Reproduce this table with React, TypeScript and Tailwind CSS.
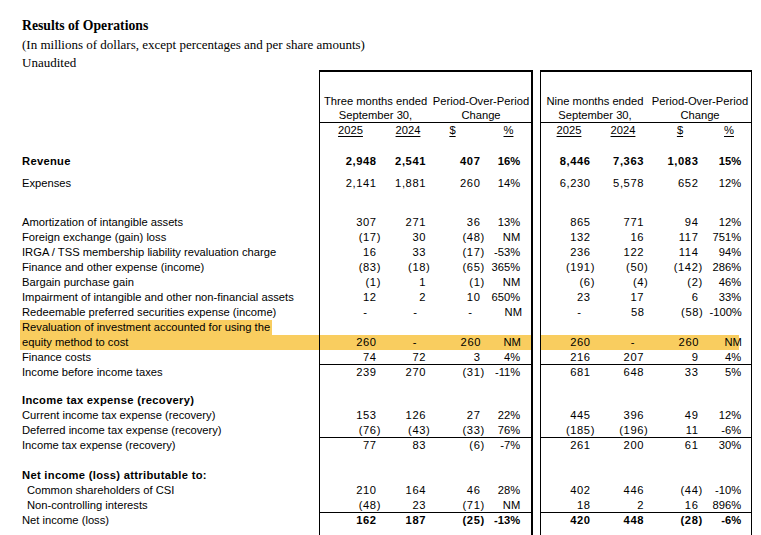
import React from "react";

const HL = "bg-[#f9cd5f]";
const B1W = ["w-[61px]", "w-[50px]", "w-[55px]", "w-[36px]"];
const B2W = ["w-[54px]", "w-[54px]", "w-[55px]", "w-[39px]"];

type V = [string, string, string, string];

function Cell({ v, w, pct }: { v: string; w: string; pct?: boolean }) {
  if (pct) return <div className={`${w} shrink-0 text-right`}>{v}</div>;
  if (v === "-") return <div className={`${w} shrink-0 text-right pr-[14px]`}>-</div>;
  const neg = v.endsWith(")");
  return (
    <div className={`${w} shrink-0 text-right tracking-[0.6px] -mr-[0.6px]`}>
      {v}
      {!neg && <span className="invisible">)</span>}
    </div>
  );
}

function Cells({ vals, widths }: { vals: V; widths: string[] }) {
  return (
    <>
      {vals.map((v, i) => (
        <Cell key={i} v={v} w={widths[i]} pct={i === 3} />
      ))}
    </>
  );
}

function Grid({
  h,
  label,
  b1,
  b2,
  rule,
  top,
}: {
  h: string;
  label?: React.ReactNode;
  b1?: React.ReactNode;
  b2?: React.ReactNode;
  rule?: boolean;
  top?: boolean;
}) {
  return (
    <div className={`flex ${h}`}>
      <div className="w-[319px] shrink-0 flex items-stretch">{label}</div>
      <div
        className={`w-[214px] shrink-0 flex border-l border-r-2 border-black ${rule ? "border-b" : ""} ${top ? "border-t-2" : ""}`}
      >
        {b1}
      </div>
      <div className="w-[7px] shrink-0" />
      <div
        className={`w-[212px] shrink-0 flex border-l border-r border-black ${rule ? "border-b" : ""} ${top ? "border-t-2" : ""}`}
      >
        {b2}
      </div>
    </div>
  );
}

function DataRow({
  label,
  a,
  b,
  rule,
  boldNums,
  boldLabel,
  indent,
  hl,
}: {
  label: string;
  a: V;
  b: V;
  rule?: boolean;
  boldNums?: boolean;
  boldLabel?: boolean;
  indent?: boolean;
  hl?: boolean;
}) {
  return (
    <Grid
      h="h-[15px]"
      rule={rule}
      label={
        hl ? (
          <div className={`ml-[20px] pl-[2px] flex-1 ${HL}`}>{label}</div>
        ) : (
          <div
            className={`${indent ? "pl-[27px]" : "pl-[22px]"} ${boldLabel ? "font-bold tracking-[0.3px]" : ""}`}
          >
            {label}
          </div>
        )
      }
      b1={
        <div className={`flex w-full ${boldNums ? "font-bold" : ""} ${hl ? HL : ""}`}>
          <Cells vals={a} widths={B1W} />
          <div className="w-[9px] shrink-0" />
        </div>
      }
      b2={
        <div className={`flex w-full ${boldNums ? "font-bold" : ""}`}>
          <div className={`flex w-[198px] shrink-0 ${hl ? HL : ""}`}>
            <Cells vals={b} widths={B2W} />
          </div>
        </div>
      }
    />
  );
}

function Spacer({ h }: { h: string }) {
  return <Grid h={h} />;
}

function Heading({ text }: { text: string }) {
  return (
    <Grid
      h="h-[15px]"
      label={<div className="pl-[22px] font-bold tracking-[0.3px]">{text}</div>}
    />
  );
}

export default function App() {
  return (
    <div className="w-[761px] h-[535px] overflow-hidden bg-white text-black">
      <div className="h-[70px] pl-[22px] pt-[16px] font-['Liberation_Serif','Times_New_Roman',serif]">
        <div className="text-[13.7px] leading-[19px] font-bold">Results of Operations</div>
        <div className="text-[13px] leading-[18px] mt-[1px]">
          (In millions of dollars, except percentages and per share amounts)
        </div>
        <div className="text-[13px] leading-[18px]">Unaudited</div>
      </div>

      <div className="font-['Liberation_Sans',Arial,sans-serif] text-[11.2px] leading-[15px]">
        <Grid
          h="h-[53px]"
          top
          rule
          b1={
            <div className="flex w-full items-end leading-[14px]">
              <div className="w-[111px] shrink-0 text-center">
                Three months ended
                <br />
                September 30,
              </div>
              <div className="w-[100px] shrink-0 text-center">
                Period-Over-Period
                <br />
                Change
              </div>
            </div>
          }
          b2={
            <div className="flex w-full items-end leading-[14px]">
              <div className="w-[108px] shrink-0 text-center">
                Nine months ended
                <br />
                September 30,
              </div>
              <div className="w-[102px] shrink-0 text-center">
                Period-Over-Period
                <br />
                Change
              </div>
            </div>
          }
        />
        <Grid
          h="h-[15px]"
          b1={
            <div className="flex w-full">
              <div className="w-[61px] shrink-0 text-center">
                <span className="underline underline-offset-2">2025</span>
              </div>
              <div className="w-[50px] shrink-0 text-center pl-[4px]">
                <span className="underline underline-offset-2">2024</span>
              </div>
              <div className="w-[55px] shrink-0 text-center pr-[12px]">
                <span className="underline underline-offset-2">$</span>
              </div>
              <div className="w-[36px] shrink-0 text-center pl-[9px]">
                <span className="underline underline-offset-2">%</span>
              </div>
            </div>
          }
          b2={
            <div className="flex w-full">
              <div className="w-[54px] shrink-0 text-center pl-[2px]">
                <span className="underline underline-offset-2">2025</span>
              </div>
              <div className="w-[54px] shrink-0 text-center pl-[2px]">
                <span className="underline underline-offset-2">2024</span>
              </div>
              <div className="w-[55px] shrink-0 text-center pl-[7px]">
                <span className="underline underline-offset-2">$</span>
              </div>
              <div className="w-[37px] shrink-0 text-center pl-[13px]">
                <span className="underline underline-offset-2">%</span>
              </div>
            </div>
          }
        />
        <Spacer h="h-[16px]" />
        <DataRow
          label="Revenue"
          boldLabel
          boldNums
          a={["2,948", "2,541", "407", "16%"]}
          b={["8,446", "7,363", "1,083", "15%"]}
        />
        <Spacer h="h-[7px]" />
        <DataRow label="Expenses" a={["2,141", "1,881", "260", "14%"]} b={["6,230", "5,578", "652", "12%"]} />
        <Spacer h="h-[24px]" />
        <DataRow
          label="Amortization of intangible assets"
          a={["307", "271", "36", "13%"]}
          b={["865", "771", "94", "12%"]}
        />
        <DataRow
          label="Foreign exchange (gain) loss"
          a={["(17)", "30", "(48)", "NM"]}
          b={["132", "16", "117", "751%"]}
        />
        <DataRow
          label="IRGA / TSS membership liability revaluation charge"
          a={["16", "33", "(17)", "-53%"]}
          b={["236", "122", "114", "94%"]}
        />
        <DataRow
          label="Finance and other expense (income)"
          a={["(83)", "(18)", "(65)", "365%"]}
          b={["(191)", "(50)", "(142)", "286%"]}
        />
        <DataRow label="Bargain purchase gain" a={["(1)", "1", "(1)", "NM"]} b={["(6)", "(4)", "(2)", "46%"]} />
        <DataRow
          label="Impairment of intangible and other non-financial assets"
          a={["12", "2", "10", "650%"]}
          b={["23", "17", "6", "33%"]}
        />
        <DataRow
          label="Redeemable preferred securities expense (income)"
          a={["-", "-", "-", "NM"]}
          b={["-", "58", "(58)", "-100%"]}
        />
        <Grid
          h="h-[15px]"
          label={
            <div className="pl-[22px] flex">
              <span className={`-ml-[2px] pl-[2px] pr-[2px] ${HL}`}>
                Revaluation of investment accounted for using the
              </span>
            </div>
          }
        />
        <DataRow
          label="equity method to cost"
          hl
          a={["260", "-", "260", "NM"]}
          b={["260", "-", "260", "NM"]}
        />
        <DataRow label="Finance costs" rule a={["74", "72", "3", "4%"]} b={["216", "207", "9", "4%"]} />
        <DataRow
          label="Income before income taxes"
          a={["239", "270", "(31)", "-11%"]}
          b={["681", "648", "33", "5%"]}
        />
        <Spacer h="h-[13px]" />
        <Heading text="Income tax expense (recovery)" />
        <DataRow
          label="Current income tax expense (recovery)"
          a={["153", "126", "27", "22%"]}
          b={["445", "396", "49", "12%"]}
        />
        <DataRow
          label="Deferred income tax expense (recovery)"
          rule
          a={["(76)", "(43)", "(33)", "76%"]}
          b={["(185)", "(196)", "11", "-6%"]}
        />
        <DataRow
          label="Income tax expense (recovery)"
          a={["77", "83", "(6)", "-7%"]}
          b={["261", "200", "61", "30%"]}
        />
        <Spacer h="h-[15px]" />
        <Heading text="Net income (loss) attributable to:" />
        <DataRow
          label="Common shareholders of CSI"
          indent
          a={["210", "164", "46", "28%"]}
          b={["402", "446", "(44)", "-10%"]}
        />
        <DataRow
          label="Non-controlling interests"
          indent
          rule
          a={["(48)", "23", "(71)", "NM"]}
          b={["18", "2", "16", "896%"]}
        />
        <DataRow
          label="Net income (loss)"
          boldNums
          a={["162", "187", "(25)", "-13%"]}
          b={["420", "448", "(28)", "-6%"]}
        />
        <Spacer h="h-[30px]" />
      </div>
    </div>
  );
}
